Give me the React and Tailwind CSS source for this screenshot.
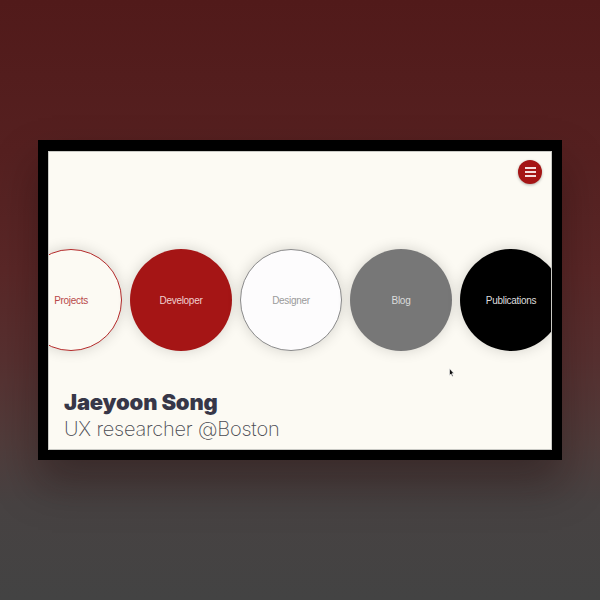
import React from "react";

const circles = [
  { label: "Projects", cls: "bg-[#fcfaf3] border border-[#b42a2a] text-[#b84848]" },
  { label: "Developer", cls: "bg-[#a51515] text-[#f0d0d0]" },
  { label: "Designer", cls: "bg-[#fdfcfd] border border-[#8a8a8a] text-[#9a9a9a]" },
  { label: "Blog", cls: "bg-[#777777] text-[#dcdcdc]" },
  { label: "Publications", cls: "bg-black text-[#dddddd]" },
];

export default function App() {
  return (
    <div className="w-[600px] h-[600px] overflow-hidden bg-[linear-gradient(to_bottom,#511a1a_0%,#552020_25%,#5a2727_45%,#573030_60%,#503c3b_74%,#474242_84%,#434343_100%)] pt-[140px] pl-[38px]">
      <div className="w-[524px] h-[320px] bg-black pt-[11px] pb-[10px] px-[10px] shadow-[0_24px_40px_rgba(20,10,10,0.35)]">
        <div className="relative h-full bg-[#fcfaf3] border border-[#c9c9c4] overflow-hidden flex flex-col">
          <div className="flex justify-end pr-[9px] pt-[8px]">
            <div className="w-[24px] h-[24px] rounded-full bg-[#a51515] shadow-[0_1px_3px_rgba(0,0,0,0.3)] flex flex-col items-center justify-center gap-[2.5px]">
              <span className="block w-[11px] h-[1.5px] bg-[#f5dede]" />
              <span className="block w-[11px] h-[1.5px] bg-[#f5dede]" />
              <span className="block w-[11px] h-[1.5px] bg-[#f5dede]" />
            </div>
          </div>
          <div className="flex gap-[8px] ml-[-29px] mt-[65px] shrink-0">
            {circles.map((c) => (
              <div
                key={c.label}
                className={`w-[102px] h-[102px] shrink-0 rounded-full flex items-center justify-center shadow-[0_0_14px_rgba(0,0,0,0.16)] text-[10px] tracking-[-0.3px] font-['Liberation_Sans',Arial,sans-serif] ${c.cls}`}
              >
                {c.label}
              </div>
            ))}
          </div>
          <div className="pl-[15px] mt-[40px] font-['Inter',sans-serif]">
            <div className="text-[22px] leading-none font-black text-[#373748] tracking-[-0.2px]">Jaeyoon Song</div>
            <div className="text-[20px] leading-none font-extralight text-[#4a4a52] mt-[6px] tracking-[-0.2px]">UX researcher @Boston</div>
          </div>
          <svg className="absolute left-[400px] top-[216px]" width="6" height="9" viewBox="0 0 6 9">
            <path d="M0.5 0.5 L0.5 7.5 L2 6 L3.2 8.5 L4.2 8 L3 5.6 L5 5.6 Z" fill="#111" stroke="#fff" strokeWidth="0.6" />
          </svg>
        </div>
      </div>
    </div>
  );
}
